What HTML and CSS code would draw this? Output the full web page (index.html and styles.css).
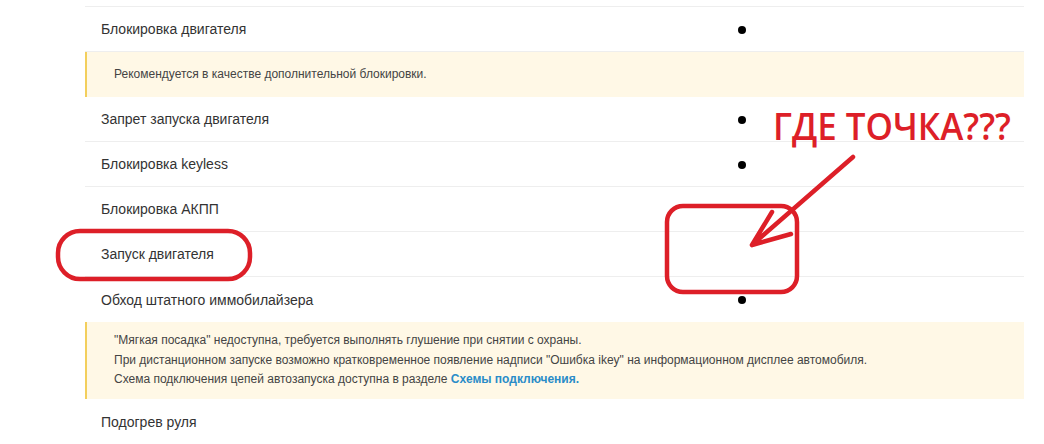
FILE: index.html
```html
<!DOCTYPE html>
<html lang="ru">
<head>
<meta charset="utf-8">
<title>Функции</title>
<link rel="stylesheet" href="styles.css">
</head>
<body>
<div class="page">
  <div class="table">
    <div class="row first"><div class="label">Блокировка двигателя</div><div class="mark"><span class="dot"></span></div></div>
    <div class="note note-single"><p>Рекомендуется в качестве дополнительной блокировки.</p></div>
    <div class="row"><div class="label">Запрет запуска двигателя</div><div class="mark"><span class="dot"></span></div></div>
    <div class="row"><div class="label">Блокировка keyless</div><div class="mark"><span class="dot"></span></div></div>
    <div class="row"><div class="label">Блокировка АКПП</div><div class="mark"></div></div>
    <div class="row"><div class="label">Запуск двигателя</div><div class="mark"></div></div>
    <div class="row no-border"><div class="label">Обход штатного иммобилайзера</div><div class="mark"><span class="dot"></span></div></div>
    <div class="note note-multi">
      <p>"Мягкая посадка" недоступна, требуется выполнять глушение при снятии с охраны.</p>
      <p>При дистанционном запуске возможно кратковременное появление надписи "Ошибка ikey" на информационном дисплее автомобиля.</p>
      <p>Схема подключения цепей автозапуска доступна в разделе <a class="link" href="#">Схемы подключения.</a></p>
    </div>
    <div class="row no-border"><div class="label">Подогрев руля</div><div class="mark"></div></div>
  </div>
  <svg class="annot" width="1044" height="444" viewBox="0 0 1044 444" aria-hidden="false">
    <text class="annot-text" x="773" y="140" textLength="238" lengthAdjust="spacingAndGlyphs">ГДЕ ТОЧКА???</text>
    <rect x="58" y="231" width="192" height="48" rx="22" ry="22" class="annot-stroke"/>
    <rect x="667" y="206" width="130" height="86" rx="16" ry="16" class="annot-stroke"/>
    <path d="M853 157 L752 245 M772 212 L752 245 L791 234" class="annot-stroke"/>
  </svg>
</div>
</body>
</html>
```
FILE: styles.css
```css
html, body {
  margin: 0;
  padding: 0;
  background: #ffffff;
}

.page {
  position: relative;
  width: 1044px;
  height: 444px;
  overflow: hidden;
  font-family: "Liberation Sans", Arial, sans-serif;
}

.table {
  margin-left: 85px;
  width: 939px;
  padding-top: 6px;
}

.row {
  display: grid;
  grid-template-columns: 653px 1fr;
  align-items: center;
  height: 44px;
  border-bottom: 1px solid #eeeeee;
}

.row.first {
  border-top: 1px solid #eeeeee;
}

.row.no-border {
  border-bottom: none;
  height: 45px;
}

.label {
  padding-left: 16px;
  font-size: 14px;
  color: #333333;
}

.mark {
  display: flex;
  align-items: center;
  height: 100%;
}

.dot {
  display: block;
  width: 8px;
  height: 8px;
  border-radius: 50%;
  background: #000000;
  margin-top: 1px;
}

.note {
  background: #fff8e6;
  border-left: 2px solid #f3cf5c;
  padding-left: 27px;
  font-size: 12px;
  color: #444444;
  display: flex;
  flex-direction: column;
  justify-content: center;
}

.note p {
  margin: 0;
  line-height: 19.5px;
}

.note-single {
  height: 45px;
}

.note-multi {
  height: 77px;
}

.link {
  color: #2a8cc8;
  font-weight: bold;
  text-decoration: none;
}

.annot {
  position: absolute;
  left: 0;
  top: 0;
  pointer-events: none;
}

.annot-text {
  font-family: "Open Sans", "Noto Sans", sans-serif;
  font-weight: 600;
  font-size: 37px;
  fill: #dd1f28;
}

.annot-stroke {
  fill: none;
  stroke: #dd1f28;
  stroke-width: 4.5;
  stroke-linecap: round;
  stroke-linejoin: round;
}
```
